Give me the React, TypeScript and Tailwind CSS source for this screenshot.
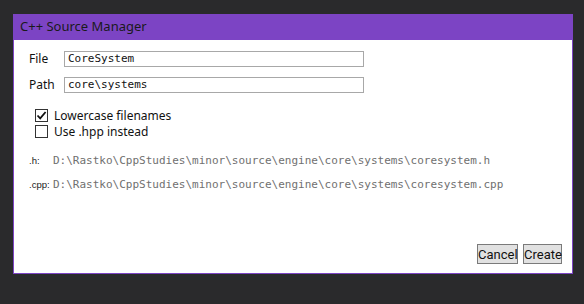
import React from "react";

const ui = { fontFamily: "'Noto Sans', 'Open Sans', sans-serif" };
const mono = { fontFamily: "'DejaVu Sans Mono', 'Liberation Mono', monospace" };
const small = { fontFamily: "'Liberation Sans', Arial, sans-serif" };

function Check({ checked, label }: { checked: boolean; label: string }) {
  return (
    <div className="flex items-center h-[13px]">
      <div className="w-[13px] h-[13px] border border-[#333] bg-white flex items-center justify-center">
        {checked && (
          <svg width="11" height="11" viewBox="0 0 11 11">
            <path d="M1.5 5.5 L4.2 8.3 L9.6 2" fill="none" stroke="#111" strokeWidth="1.8" />
          </svg>
        )}
      </div>
      <span className="ml-[6px] text-[12px] text-[#111] leading-none" style={ui}>
        {label}
      </span>
    </div>
  );
}

function PathRow({ label, path }: { label: string; path: string }) {
  return (
    <div className="flex items-center h-[14px]">
      <span className="w-[24px] text-[9.5px] text-[#222]" style={small}>
        {label}
      </span>
      <span className="text-[11px] text-[#707070]" style={mono}>
        {path}
      </span>
    </div>
  );
}

export default function App() {
  const field = (label: string, value: string) => (
    <div className="flex items-center h-[16px]">
      <span className="w-[35px] text-[12px] text-[#111]" style={ui}>
        {label}
      </span>
      <div
        className="w-[300px] h-[16px] border border-[#a8a8a8] bg-white px-[3px] text-[11px] leading-[14px] text-[#111]"
        style={mono}
      >
        {value}
      </div>
    </div>
  );

  return (
    <div className="w-[584px] h-[304px] bg-[#2a2a2c] pt-[14px] pl-[13px]">
      <div className="w-[560px] h-[260px] bg-white border border-t-0 border-[#7c44c4] flex flex-col">
        <div className="h-[26px] bg-[#7c44c4] flex items-center pl-[6px] text-[13px] text-[#1a1a1a]" style={ui}>
          C++ Source Manager
        </div>
        <div className="flex-1 flex flex-col pl-[15px] pr-[10px] pt-[11px] pb-[9px]">
          {field("File", "CoreSystem")}
          <div className="mt-[10px]">{field("Path", "core\\systems")}</div>
          <div className="mt-[16px] pl-[6px] flex flex-col gap-[3px]">
            <Check checked label="Lowercase filenames" />
            <Check checked={false} label="Use .hpp instead" />
          </div>
          <div className="mt-[16px]">
            <PathRow label=".h:" path="D:\Rastko\CppStudies\minor\source\engine\core\systems\coresystem.h" />
          </div>
          <div className="mt-[10px]">
            <PathRow label=".cpp:" path="D:\Rastko\CppStudies\minor\source\engine\core\systems\coresystem.cpp" />
          </div>
          <div className="mt-auto flex justify-end gap-[5px]">
            <button
              className="h-[20px] w-[41px] bg-[#e1e1e1] border border-[#7a7a7a] text-[13px] leading-none text-[#111]"
              style={{ fontFamily: "Roboto, sans-serif" }}
            >
              Cancel
            </button>
            <button
              className="h-[20px] w-[39px] bg-[#e1e1e1] border border-[#7a7a7a] text-[13px] leading-none text-[#111]"
              style={{ fontFamily: "Roboto, sans-serif" }}
            >
              Create
            </button>
          </div>
        </div>
      </div>
    </div>
  );
}
